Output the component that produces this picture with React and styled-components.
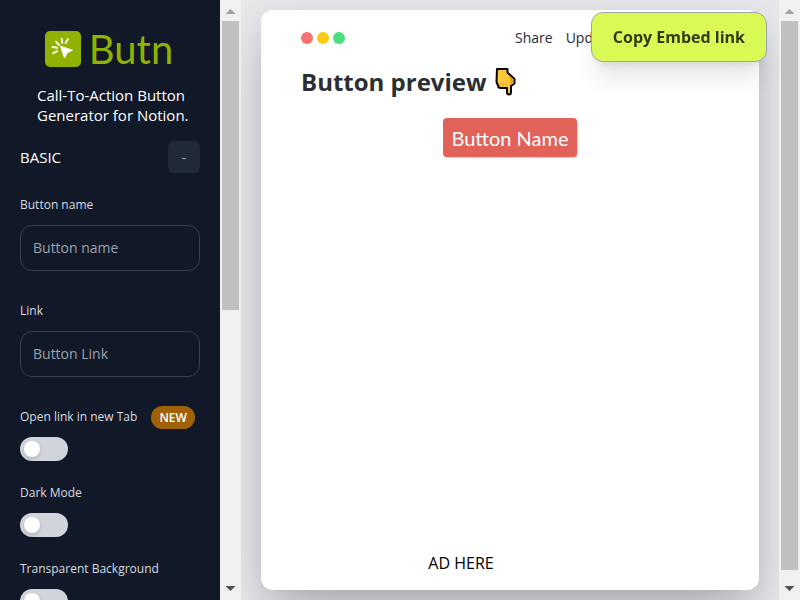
import React from "react";
import styled, { createGlobalStyle } from "styled-components";

const GlobalStyle = createGlobalStyle`
  *, *::before, *::after { box-sizing: border-box; }
  body {
    margin: 0;
    font-family: "Open Sans", "Noto Sans", sans-serif;
    font-size: 15px;
    line-height: 20px;
  }
  button, input { font: inherit; }
  h1, h2, p { margin: 0; }
`;

const Page = styled.div`
  display: grid;
  grid-template-columns: 220px 21px minmax(0, 1fr) 21px;
  height: 100vh;
  overflow: hidden;
  background: #e5e7eb;
`;

const Sidebar = styled.aside`
  min-height: 0;
  overflow: hidden;
  padding: 31px 20px 0;
  background: #111827;
  color: #fff;
`;

const Brand = styled.h1`
  display: flex;
  align-items: center;
  justify-content: center;
  gap: 8px;
  height: 36px;
  padding-right: 2px;
  color: #90b200;
  font-family: Lato, sans-serif;
  font-size: 40px;
  font-weight: 400;
  line-height: 36px;
`;

const Tagline = styled.p`
  width: 146px;
  margin: 18px auto 16px;
  font-size: 15px;
  white-space: nowrap;
`;

const SectionHeader = styled.div`
  display: flex;
  align-items: center;
  justify-content: space-between;
  margin-bottom: 22px;
  font-size: 15px;
`;

const CollapseButton = styled.button`
  width: 32px;
  height: 32px;
  padding: 0;
  border: 0;
  border-radius: 6px;
  background: #1f2937;
  color: #9ca3af;
  font-size: 15px;
`;

const Field = styled.div`
  display: flex;
  flex-direction: column;
  gap: 10px;
  margin-bottom: 30px;
`;

const Label = styled.label`
  color: #d9dce1;
  font-size: 12px;
  font-weight: 500;
  white-space: nowrap;
`;

const TextInput = styled.input`
  width: 100%;
  height: 46px;
  padding: 0 12px 2px;
  border: 1px solid #374151;
  border-radius: 12px;
  background: transparent;
  color: #fff;
  font-size: 14px;
  &::placeholder { color: #9ca3af; opacity: 1; }
`;

const ToggleField = styled.div`
  display: flex;
  flex-direction: column;
  gap: 10px;
  margin-bottom: 22px;
`;

const LabelRow = styled.div`
  display: flex;
  align-items: center;
  gap: 14px;
  height: 20px;
`;

const Badge = styled.span`
  flex: none;
  padding: 2px 8px;
  border-radius: 12px;
  background: #a16207;
  color: #fff;
  font-size: 12px;
  font-weight: 600;
  line-height: 19px;
`;

const Toggle = styled.input`
  appearance: none;
  display: flex;
  align-items: center;
  width: 48px;
  height: 24px;
  margin: 0;
  padding: 0 4px;
  border-radius: 12px;
  background: #d1d5db;
  &::before {
    content: "";
    width: 16px;
    height: 16px;
    border-radius: 50%;
    background: #fff;
    box-shadow: 0 2px 4px rgba(0, 0, 0, 0.15);
  }
  &:checked { justify-content: flex-end; background: #90b200; }
`;

const ScrollTrack = styled.div`
  display: flex;
  flex-direction: column;
  align-items: center;
  height: 100vh;
  background: #f0f0f0;
`;

const ScrollArrow = styled.svg`
  flex: none;
  width: 21px;
  height: 21px;
`;

const ScrollThumb = styled.div`
  flex: ${({ $share }) => $share} 1 0;
  width: 17px;
  background: #c0c0c0;
`;

const ScrollRest = styled.div`
  flex: ${({ $share }) => $share} 1 0;
`;

const Main = styled.main`
  display: flex;
  min-width: 0;
  overflow: hidden;
  padding: 10px 20px;
`;

const Card = styled.section`
  display: flex;
  flex: 1;
  flex-direction: column;
  min-width: 0;
  padding: 18px 40px 16px;
  border-radius: 12px;
  background: #fff;
  box-shadow: 0 25px 50px -12px rgba(0, 0, 0, 0.25), 0 10px 30px rgba(0, 0, 0, 0.08);
`;

const WindowBar = styled.header`
  display: flex;
  align-items: center;
  justify-content: space-between;
`;

const Dots = styled.div`
  display: flex;
  gap: 4px;
`;

const Dot = styled.span`
  width: 12px;
  height: 12px;
  border-radius: 50%;
  background: ${({ $color }) => $color};
`;

const Links = styled.nav`
  display: flex;
  flex: 0 1 204px;
  gap: 13px;
`;

const NavLink = styled.a`
  color: #1f2937;
  font-size: 14px;
  font-weight: 400;
  text-decoration: none;
`;

const Heading = styled.h2`
  display: flex;
  align-items: center;
  gap: 8px;
  margin-top: 16px;
  color: #2b2f33;
  font-size: 24px;
  font-weight: 700;
  line-height: 36px;
`;

const Hand = styled.svg`
  width: 22px;
  height: 28px;
`;

const PreviewButton = styled.button`
  align-self: center;
  height: 39px;
  margin-top: 18px;
  padding: 0 8px;
  border: 0;
  border-radius: 4px;
  background: #e16259;
  box-shadow: 1px 1px 2px rgba(0, 0, 0, 0.2);
  color: #fff;
  font-family: Lato, sans-serif;
  font-size: 20px;
  font-weight: 400;
`;

const AdSlot = styled.p`
  margin: auto auto 0;
  padding: 0 98px 1px 0;
  color: #000;
  font-size: 16px;
`;

const CopyButton = styled.button`
  position: fixed;
  top: 12px;
  right: 33px;
  height: 50px;
  padding: 0 21px;
  border: 1px solid #9ca3af;
  border-radius: 12px;
  background: #d9f954;
  box-shadow: 0 20px 25px -5px rgba(0, 0, 0, 0.1), 0 8px 10px -6px rgba(0, 0, 0, 0.1);
  color: #333b15;
  font-size: 16px;
  font-weight: 700;
  white-space: nowrap;
`;

function LogoMark() {
  return (
    <svg width="36" height="36" viewBox="0 0 36 36" aria-hidden="true">
      <rect width="36" height="36" rx="5" fill="#90b200" />
      <path d="M15.5 15.2 27.500 19.2 22.4 21.6 19.5 27Z" fill="#fff" stroke="#fff" strokeLinejoin="round" />
      <path d="M11.2 10.8 14 14M16.8 8 17.2 11.8M22.8 8.2 20.5 12M7.5 16 12 16.8M8.2 22.2 12.2 20.2" fill="none" stroke="#fff" strokeWidth="2" strokeLinecap="round" />
    </svg>
  );
}

function PointingHand() {
  return (
    <Hand viewBox="0 0 22 28" role="img" aria-label="Pointing down">
      <path d="M2 1H12.500V4.500L19.500 11V15.500L16 18V24.500Q16 26.500 14 26.500Q12 26.500 12 24.500V20H6Q3 20 3 17.500L1.500 14Z" fill="#ffc83d" stroke="#000" strokeWidth="2" strokeLinejoin="round" />
      <path d="M14 7 18.500 11.500V15L16 16.500 15 12Z" fill="#e79b13" />
      <path d="M5 15V18M8 15V18M11 15V18" stroke="#e5a526" />
    </Hand>
  );
}

function Scrollbar({ thumb, rest }) {
  return (
    <ScrollTrack aria-hidden="true">
      <ScrollArrow viewBox="0 0 21 21"><path d="M5.500 14 10.500 9 15.500 14Z" fill="#a3a3a3" /></ScrollArrow>
      <ScrollThumb $share={thumb} />
      <ScrollRest $share={rest} />
      <ScrollArrow viewBox="0 0 21 21"><path d="M5.500 7 10.500 12 15.500 7Z" fill="#505050" /></ScrollArrow>
    </ScrollTrack>
  );
}

function TextField({ id, label, placeholder }) {
  return (
    <Field>
      <Label htmlFor={id}>{label}</Label>
      <TextInput id={id} type="text" placeholder={placeholder} />
    </Field>
  );
}

function Switch({ id, label, badge }) {
  return (
    <ToggleField>
      <LabelRow>
        <Label htmlFor={id}>{label}</Label>
        {badge && <Badge>{badge}</Badge>}
      </LabelRow>
      <Toggle id={id} type="checkbox" role="switch" />
    </ToggleField>
  );
}

export default function App() {
  return (
    <>
      <GlobalStyle />
      <Page>
        <Sidebar>
          <Brand><LogoMark />Butn</Brand>
          <Tagline>Call-To-Action Button<br />Generator for Notion.</Tagline>
          <SectionHeader>
            <span>BASIC</span>
            <CollapseButton type="button" aria-label="Collapse basic settings">-</CollapseButton>
          </SectionHeader>
          <TextField id="name" label="Button name" placeholder="Button name" />
          <TextField id="link" label="Link" placeholder="Button Link" />
          <Switch id="new-tab" label="Open link in new Tab" badge="NEW" />
          <Switch id="dark" label="Dark Mode" />
          <Switch id="transparent" label="Transparent Background" />
        </Sidebar>
        <Scrollbar thumb={289} rest={269} />
        <Main>
          <Card>
            <WindowBar>
              <Dots>
                <Dot $color="#f87171" />
                <Dot $color="#facc15" />
                <Dot $color="#4ade80" />
              </Dots>
              <Links>
                <NavLink href="#share">Share</NavLink>
                <NavLink href="#updates">Updates</NavLink>
              </Links>
            </WindowBar>
            <Heading>Button preview <PointingHand /></Heading>
            <PreviewButton type="button">Button Name</PreviewButton>
            <AdSlot>AD HERE</AdSlot>
          </Card>
        </Main>
        <Scrollbar thumb={549} rest={9} />
        <CopyButton type="button">Copy Embed link</CopyButton>
      </Page>
    </>
  );
}
